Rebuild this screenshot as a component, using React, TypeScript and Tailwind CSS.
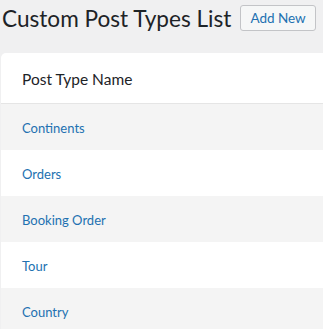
import React from "react";

const rows = ["Continents", "Orders", "Booking Order", "Tour", "Country"];

export default function App() {
  return (
    <div
      className="w-[323px] h-[329px] overflow-hidden bg-[#f0f0f1]"
      style={{ fontFamily: 'Lato, "Noto Sans", sans-serif' }}
    >
      <div className="flex items-center h-[36px] pl-[2px]">
        <h1 className="text-[22.6px] leading-[30px] pt-[1px] font-normal text-[#1d2327] whitespace-nowrap">
          Custom Post Types List
        </h1>
        <button className="ml-[9px] h-[26px] px-[9px] rounded-[3px] border border-[#c3c4c7] bg-[#f6f7f7] text-[13.5px] leading-[24px] text-[#2271b1] whitespace-nowrap">
          Add New
        </button>
      </div>
      <div className="mt-[17px] ml-[1px] bg-white rounded-tl-[5px] overflow-hidden">
        <div className="h-[51px] flex items-center pl-[21px] pt-[4px] border-b border-[#e5e5e5] text-[15.5px] text-[#1d2327]">
          Post Type Name
        </div>
        {rows.map((r, i) => (
          <div
            key={r}
            className={`h-[46px] flex items-center pl-[21px] pt-[3px] text-[13px] text-[#2271b1] ${
              i % 2 === 0 ? "bg-[#f4f4f4]" : "bg-white"
            }`}
          >
            {r}
          </div>
        ))}
      </div>
    </div>
  );
}
